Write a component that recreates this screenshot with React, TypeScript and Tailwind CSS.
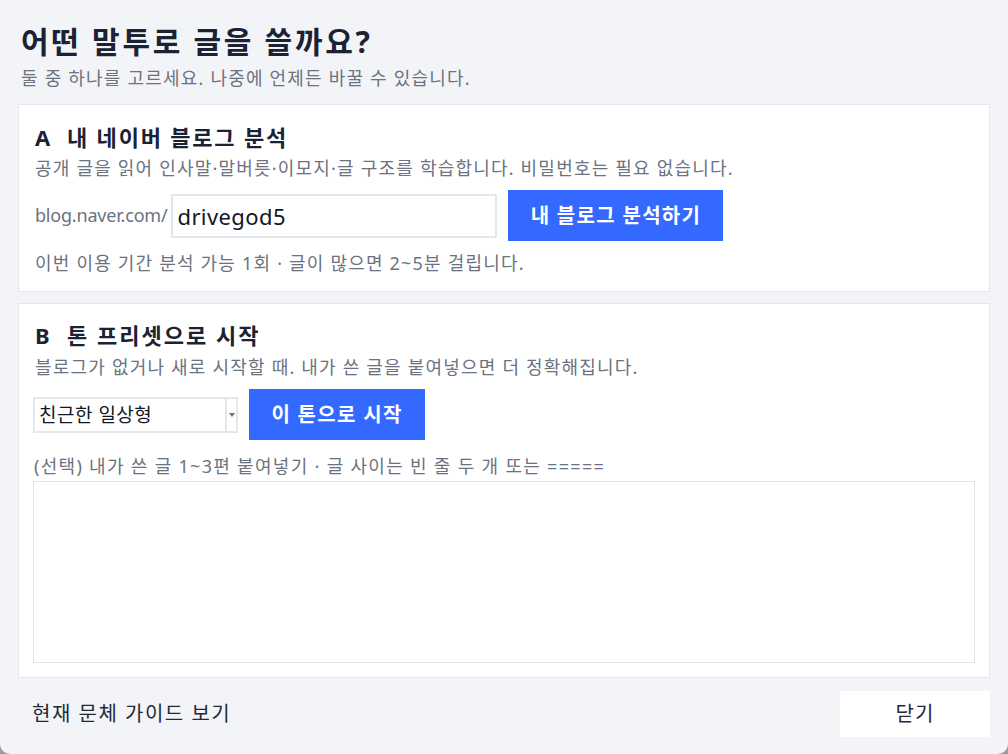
import { useState } from "react";

const font = { fontFamily: '"Noto Sans", "Noto Sans CJK KR", sans-serif' };

const App = () => {
  const [blogId, setBlogId] = useState("drivegod5");
  const [sample, setSample] = useState("");

  return (
    <div className="h-[754px] w-full bg-[#9a9ca3]" style={font}>
      <div className="flex h-full flex-col rounded-b-[10px] bg-[#f3f4f8] px-[18px] pt-[24px]">
        <h1 className="pl-[3px] text-[30px] font-bold leading-[36px] tracking-[2.7px] text-[#1a2233]">
          어떤 말투로 글을 쓸까요?
        </h1>
        <p className="mt-[6px] pl-[3px] text-[18px] leading-[24px] tracking-[1.2px] text-[#6b7280]">
          둘 중 하나를 고르세요. 나중에 언제든 바꿀 수 있습니다.
        </p>

        {/* A */}
        <section className="mt-[14px] border border-[#e3e6ec] bg-white px-[14px] pb-[16px] pt-[18px]">
          <h2 className="pl-[2px] text-[22px] font-bold leading-[28px] tracking-[1.8px] text-[#1a2233]">
            A&nbsp;&nbsp;내 네이버 블로그 분석
          </h2>
          <p className="mt-[5px] pl-[2px] text-[18px] leading-[24px] tracking-[1.2px] text-[#6b7280]">
            공개 글을 읽어 인사말·말버릇·이모지·글 구조를 학습합니다. 비밀번호는 필요 없습니다.
          </p>
          <div className="mt-[10px] flex items-center">
            <span className="pl-[2px] text-[18px] tracking-[-0.2px] text-[#6b7280]">blog.naver.com/</span>
            <input
              value={blogId}
              onChange={(e) => setBlogId(e.target.value)}
              className="ml-[4px] h-[44px] w-[326px] border-2 border-[#e3e6ec] px-[4px] text-[22px] tracking-[0.4px] text-[#111827] focus:outline-none"
            />
            <button className="ml-[11px] h-[51px] w-[215px] bg-[#3369ff] text-[20px] font-bold tracking-[1.3px] text-white">
              내 블로그 분석하기
            </button>
          </div>
          <p className="mt-[10px] pl-[2px] text-[18px] leading-[24px] tracking-[1.2px] text-[#6b7280]">
            이번 이용 기간 분석 가능 1회 · 글이 많으면 2~5분 걸립니다.
          </p>
        </section>

        {/* B */}
        <section className="mt-[11px] border border-[#e3e6ec] bg-white px-[14px] pb-[14px] pt-[17px]">
          <h2 className="pl-[2px] text-[22px] font-bold leading-[28px] tracking-[2px] text-[#1a2233]">
            B&nbsp;&nbsp;톤 프리셋으로 시작
          </h2>
          <p className="mt-[6px] pl-[2px] text-[18px] leading-[24px] tracking-[1.2px] text-[#6b7280]">
            블로그가 없거나 새로 시작할 때. 내가 쓴 글을 붙여넣으면 더 정확해집니다.
          </p>
          <div className="mt-[10px] flex items-center">
            <div className="flex h-[36px] w-[205px] border-2 border-[#e6e7ea] bg-white">
              <span className="flex-1 pl-[4px] text-[19px] leading-[32px] tracking-[0.5px] text-[#111827]">
                친근한 일상형
              </span>
              <span className="flex w-[11px] items-center justify-center border-l-2 border-[#e6e7ea]">
                <span className="h-0 w-0 border-x-[3px] border-t-[4px] border-x-transparent border-t-[#6b7280]" />
              </span>
            </div>
            <button className="ml-[11px] h-[51px] w-[176px] bg-[#3369ff] text-[20px] font-bold tracking-[1.3px] text-white">
              이 톤으로 시작
            </button>
          </div>
          <p className="mt-[14px] pl-[1px] text-[18px] leading-[24px] tracking-[1.3px] text-[#6b7280]">
            (선택) 내가 쓴 글 1~3편 붙여넣기 · 글 사이는 빈 줄 두 개 또는 =====
          </p>
          <textarea
            value={sample}
            onChange={(e) => setSample(e.target.value)}
            className="mt-[3px] block h-[182px] w-full resize-none border border-[#e1e5ec] p-2 text-[16px] focus:outline-none"
          />
        </section>

        <div className="mt-[13px] flex items-center justify-between">
          <button className="pl-[14px] text-[20px] tracking-[1.5px] text-[#1f2937]">현재 문체 가이드 보기</button>
          <button className="h-[46px] w-[150px] bg-white text-[20px] tracking-[1px] text-[#1f2937]">닫기</button>
        </div>
      </div>
    </div>
  );
};

export default App;
